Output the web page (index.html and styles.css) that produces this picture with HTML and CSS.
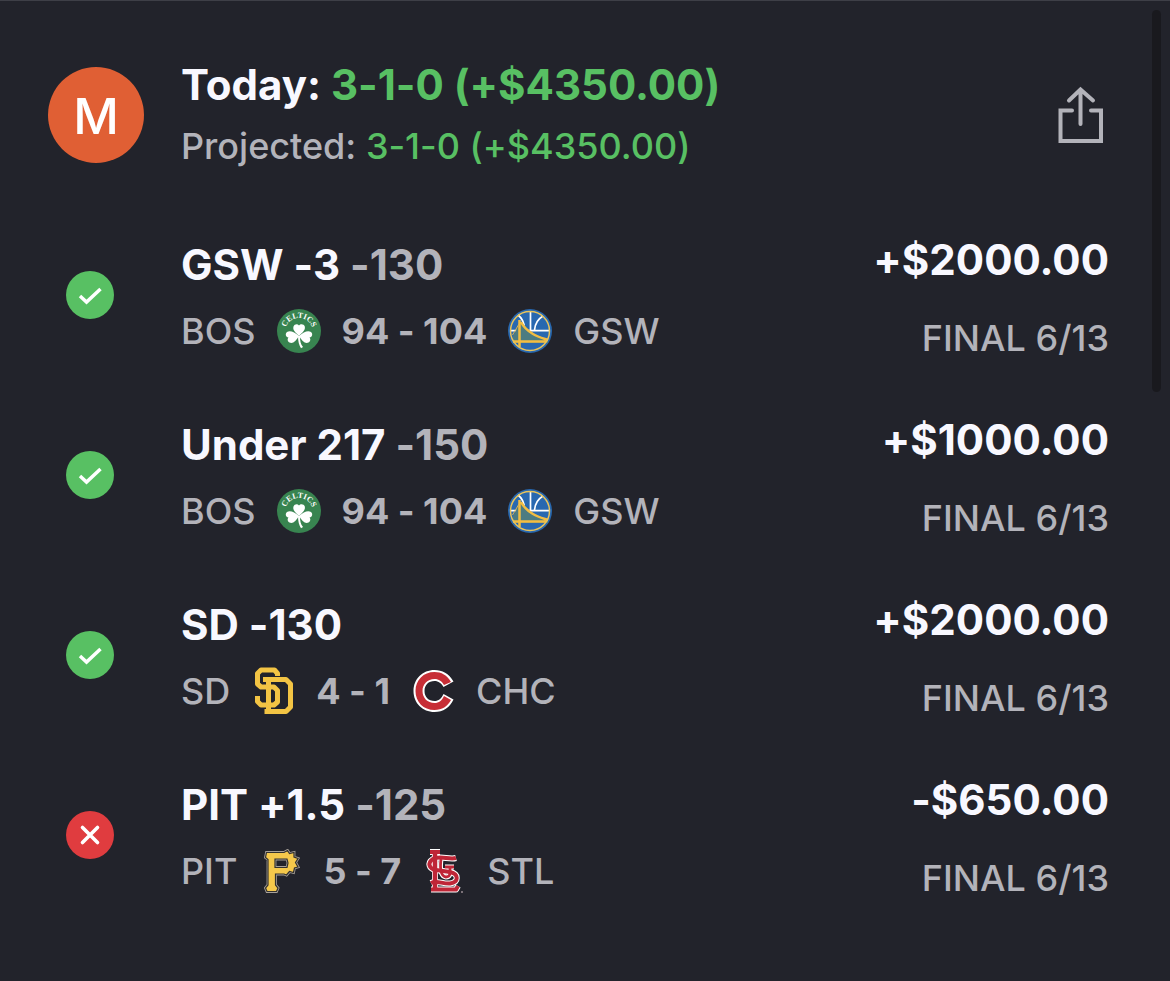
FILE: index.html
```html
<!DOCTYPE html>
<html lang="en">
<head>
	<meta charset="utf-8">
	<meta name="viewport" content="width=device-width, initial-scale=1">
	<title>Today's Bets</title>
	<link rel="stylesheet" href="styles.css">
</head>
<body>
	<!-- logos and icons shared by the rows -->
	<svg class="sprite" aria-hidden="true">
		<symbol id="check" viewBox="0 0 48 48">
			<circle cx="24" cy="24" r="24" fill="#58c063"/>
			<path d="M14 25l6.500 6L34.500 18" fill="none" stroke="#fff" stroke-width="3.500"/>
		</symbol>
		<symbol id="cross" viewBox="0 0 48 48">
			<circle cx="24" cy="24" r="24" fill="#e03c3f"/>
			<path d="M16.500 16.500l15 15m0-15l-15 15" fill="none" stroke="#fff" stroke-width="3.600" stroke-linecap="round"/>
		</symbol>
		<symbol id="bos" viewBox="0 0 44 44">
			<circle cx="22" cy="22" r="22" fill="#388450"/>
			<path id="bos-arc" d="M8 23A14 14 0 0 1 36 23" fill="none"/>
			<text class="celtics" text-anchor="middle"><textPath href="#bos-arc" startOffset="50%">CELTICS</textPath></text>
			<g fill="#fff">
				<path d="M22 27C18 23 15.500 21 16.500 17.500C17.500 15 20.500 14.500 22 16.500C23.500 14.500 27 15 27.800 17.500C28.500 21 26 23 22 27z"/>
				<path d="M22 27C19 32 16 35 12.500 33.500C10 32.200 10.500 29.500 11.500 28.500C8.500 28 8 24.500 10 23C13.500 21 17.500 23.500 22 27z"/>
				<path d="M22 27C25 32 28 35 31.500 33.500C34 32.200 33.500 29.500 32.500 28.500C35.500 28 36 24.500 34 23C30.500 21 26.500 23.500 22 27z"/>
				<path d="M21 27h2c0 5 .500 8 3 11l-2 1.200c-2-3-3-7-3-12.200z"/>
			</g>
		</symbol>
		<symbol id="gsw" viewBox="0 0 44 44">
			<circle cx="22" cy="22" r="22" fill="#2868b0"/>
			<path d="M22.500 3v19M3 21.700h38M10 6c4 3 6 8 6.500 13M35 7c-5 3-8 8-8.500 14" fill="none" stroke="#fff" stroke-width="1.700"/>
			<path d="M5 27l6-11 2-3 10 10 17 8v3H5z" fill="#4c7c81"/>
			<path d="M11.500 11v27M13 13c3 6 7 9 12 12s9 4 15 6M5 32.500h33" fill="none" stroke="#f2bd43" stroke-width="2.500"/>
			<path d="M11 15L4.500 26" stroke="#e0b64d"/>
			<circle cx="22" cy="22" r="19.500" fill="none" stroke="#e9c45b" stroke-width="1.500"/>
		</symbol>
		<symbol id="sd" viewBox="0 0 44 48">
			<g fill="none" stroke="#f3c444" stroke-width="5" stroke-linejoin="round">
				<path d="M26.500 9V6.500L23.500 3H10L6.500 6.500V17L10 20H23L26.500 23.500V35L23 38H10L6.500 34.500V29"/>
				<path d="M12 12.500H35L39.500 17V40L35 44.500H13.500M17.500 12.500V44.500"/>
			</g>
			<path d="M20.500 15.500V17M20.500 23V35M14.500 23V35" stroke="#22232b"/>
		</symbol>
		<symbol id="chc" viewBox="0 0 44 44">
			<path d="M42.500 12.500C38 4.500 31 1 23.500 1C11.500 1 2.500 10 2.500 22S11.500 43 23.500 43C32 43 39 38.500 42.500 30.500L32.500 25C30.500 29.500 27.500 32 23.500 32C17.500 32 13.500 28 13.500 22S17.500 12 23.500 12C27.500 12 30.500 14.500 32.500 18z" fill="#fff"/>
			<path d="M40 13C36 6 30.500 3 23.500 3C12.500 3 4.500 11 4.500 22S12.500 41 23.500 41C31 41 36.500 37.500 40 31L33 27C31 31.500 28 34 23.500 34C16.500 34 11.500 29 11.500 22S16.500 10 23.500 10C28 10 31 12.500 33 16z" fill="#c72e36"/>
		</symbol>
		<symbol id="pit" viewBox="0 0 44 44">
			<g fill="#f5c84b" fill-rule="evenodd">
				<path d="M8.500 3.500H26L29.500 1.500L31.500 4.500L36 3.500L36 8L40 9.500L37.500 13.500L40 18L36.500 19L35.500 23.500L31.500 22.500L28.500 26L26 25H17.500V36L20 39L18.500 42.500H9L7.500 39L10 36V10.500L7.500 8.500zM17 10V18.500H29L30 14L29 10z" stroke="#a8a199" stroke-width="2.800"/>
				<path d="M8.500 3.500H26L29.500 1.500L31.500 4.500L36 3.500L36 8L40 9.500L37.500 13.500L40 18L36.500 19L35.500 23.500L31.500 22.500L28.500 26L26 25H17.500V36L20 39L18.500 42.500H9L7.500 39L10 36V10.500L7.500 8.500zM17 10V18.500H29L30 14L29 10z" stroke="#33312f" stroke-width="1.200"/>
			</g>
		</symbol>
		<symbol id="stl" viewBox="0 0 44 44">
			<g fill="none" stroke="#fff" stroke-width="6" stroke-linejoin="round">
				<path d="M8 3H18M13 3V40M9 40.500H34L36 37"/>
				<path d="M34 9C27 11 18 6 11 10C5 14 7 20 14 21L28 23C37 25 37 33 28 34.500C20 35 15 31 9 34"/>
				<path d="M19 10C18 18 18 27 24 28C29 28 28 23 28 18M23 18H32" stroke-width="5"/>
			</g>
			<g fill="none" stroke="#bf2637" stroke-width="4">
				<path d="M8 3H18M9 40.500H34L36 37"/>
				<path d="M13 3V40" stroke-width="4.500"/>
				<path d="M34 9C27 11 18 6 11 10C5 14 7 20 14 21L28 23C37 25 37 33 28 34.500C20 35 15 31 9 34"/>
				<path d="M19 10C18 18 18 27 24 28C29 28 28 23 28 18M23 18H32" stroke-width="2.800"/>
			</g>
			<circle cx="40" cy="43" r="1" fill="#9a8d93"/>
		</symbol>
	</svg>

	<main class="card">
		<header class="summary">
			<div class="avatar">M</div>
			<div class="totals">
				<h1 class="today">Today: <span class="win">3-1-0 (+$4350.00)</span></h1>
				<p class="projected">Projected: <span class="win">3-1-0 (+$4350.00)</span></p>
			</div>
			<button class="share" type="button" aria-label="Share">
				<svg width="46" height="58" viewBox="0 0 46 58" fill="none" stroke="#b3b3ba" stroke-width="4" stroke-linecap="round">
					<path d="M14 24.500H2.500V55H43V24.500H33M22.500 38V4M11 14.500L22.500 3.500L35 14.500"/>
				</svg>
			</button>
		</header>

		<ul class="bets">
			<li class="bet">
				<svg class="status" role="img" aria-label="Won"><use href="#check"/></svg>
				<div class="info">
					<h2 class="pick">GSW -3 <span class="odds">-130</span></h2>
					<div class="game">
						<span>BOS</span>
						<svg class="logo"><use href="#bos"/></svg>
						<span class="score">94 - 104</span>
						<svg class="logo"><use href="#gsw"/></svg>
						<span>GSW</span>
					</div>
				</div>
				<div class="result">
					<p class="amount">+$2000.00</p>
					<p class="final">FINAL 6/13</p>
				</div>
			</li>
			<li class="bet">
				<svg class="status" role="img" aria-label="Won"><use href="#check"/></svg>
				<div class="info">
					<h2 class="pick">Under 217 <span class="odds">-150</span></h2>
					<div class="game">
						<span>BOS</span>
						<svg class="logo"><use href="#bos"/></svg>
						<span class="score">94 - 104</span>
						<svg class="logo"><use href="#gsw"/></svg>
						<span>GSW</span>
					</div>
				</div>
				<div class="result">
					<p class="amount">+$1000.00</p>
					<p class="final">FINAL 6/13</p>
				</div>
			</li>
			<li class="bet">
				<svg class="status" role="img" aria-label="Won"><use href="#check"/></svg>
				<div class="info">
					<h2 class="pick">SD -130</h2>
					<div class="game">
						<span>SD</span>
						<svg class="logo tall"><use href="#sd"/></svg>
						<span class="score">4 - 1</span>
						<svg class="logo"><use href="#chc"/></svg>
						<span>CHC</span>
					</div>
				</div>
				<div class="result">
					<p class="amount">+$2000.00</p>
					<p class="final">FINAL 6/13</p>
				</div>
			</li>
			<li class="bet">
				<svg class="status" role="img" aria-label="Lost"><use href="#cross"/></svg>
				<div class="info">
					<h2 class="pick">PIT +1.5 <span class="odds">-125</span></h2>
					<div class="game">
						<span>PIT</span>
						<svg class="logo"><use href="#pit"/></svg>
						<span class="score">5 - 7</span>
						<svg class="logo"><use href="#stl"/></svg>
						<span>STL</span>
					</div>
				</div>
				<div class="result">
					<p class="amount">-$650.00</p>
					<p class="final">FINAL 6/13</p>
				</div>
			</li>
		</ul>
		<div class="scrollbar"></div>
	</main>
</body>
</html>
```
FILE: styles.css
```css
*{
	padding: 0;
	margin: 0;
	box-sizing: border-box;
}
body{
	background: #22232b;
	color: #b3b3ba;
	font-family: "Inter", sans-serif;
	font-size: 36px;
	font-weight: 500;
	font-variant-ligatures: no-contextual;
	line-height: 44px;
}
.sprite{
	display: none;
}
.card{
	position: relative;
	min-height: 100vh;
	padding: 60px 61px 0 48px;
	border-top: 1px solid #3e3f47;
}
.summary{
	display: flex;
	align-items: center;
}
.avatar{
	width: 96px;
	height: 96px;
	margin-right: 37px;
	border-radius: 50%;
	background: #e05f34;
	color: #fff;
	font-size: 50px;
	font-weight: 500;
	line-height: 98px;
	text-align: center;
}
.totals{
	flex: 1;
}
.today{
	font-size: 42px;
	font-weight: 700;
	line-height: 48px;
	color: #f8f8ff;
}
.projected{
	margin-top: 15px;
}
.win{
	color: #58c063;
}
.share{
	width: 56px;
	height: 58px;
	border: none;
	background: none;
	cursor: pointer;
}
.share svg{
	display: block;
	margin-left: auto;
	margin-right: 5px;
}
.bets{
	margin-top: 37px;
	list-style: none;
}
.bet{
	display: flex;
	align-items: center;
	height: 180px;
}
.status{
	width: 48px;
	height: 48px;
	margin: 0 67px 0 18px;
}
.info{
	flex: 1;
	padding-top: 6px;
}
.pick, .amount{
	font-size: 42px;
	font-weight: 700;
	line-height: 48px;
	color: #f8f8ff;
}
.odds{
	color: #b3b3ba;
}
.game{
	display: flex;
	align-items: center;
	gap: 21px;
	height: 48px;
	margin-top: 18px;
}
.score{
	font-weight: 700;
}
.logo{
	width: 44px;
	height: 44px;
}
.logo.tall{
	height: 48px;
}
.celtics{
	font-family: "Liberation Serif", serif;
	font-size: 8px;
	font-weight: 700;
	fill: #fff;
}
.result{
	padding-top: 6px;
	text-align: right;
}
.final{
	margin-top: 32px;
}
.scrollbar{
	position: absolute;
	top: 9px;
	right: 9px;
	width: 9px;
	height: 382px;
	border-radius: 5px;
	background: #19191e;
}
```
